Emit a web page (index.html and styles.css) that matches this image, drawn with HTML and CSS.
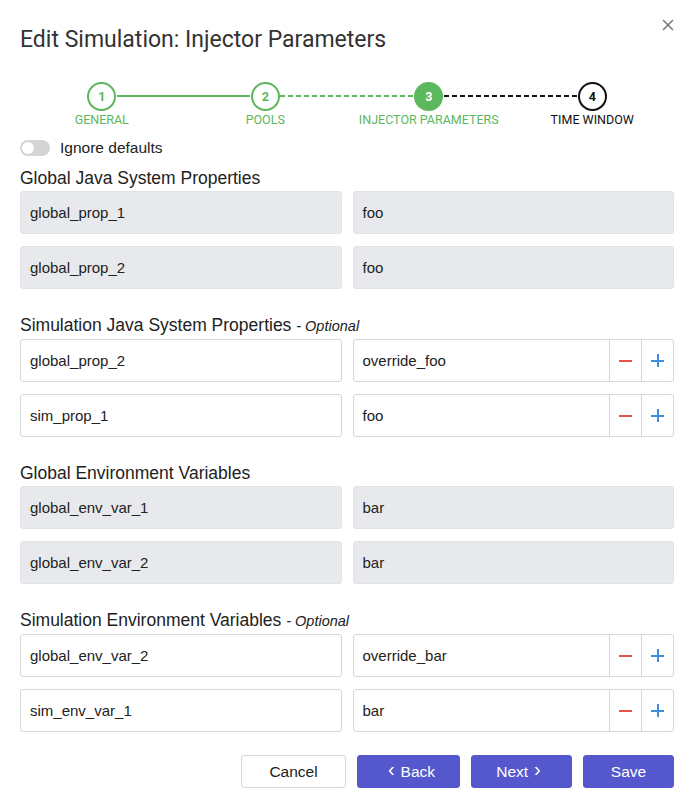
FILE: index.html
```html
<!DOCTYPE html>
<html>
<head>
<meta charset="utf-8">
<link rel="stylesheet" href="styles.css">
</head>
<body>
<div class="modal">
  <button class="close" aria-label="Close">
    <svg width="12" height="12" viewBox="0 0 12 12"><path d="M1 1L11 11M11 1L1 11" stroke="#7a7a7a" stroke-width="1.6" fill="none"/></svg>
  </button>
  <h1 class="title">Edit Simulation: Injector Parameters</h1>

  <div class="stepper">
    <div class="step done line-solid">
      <div class="circle">1</div>
      <div class="step-label">General</div>
    </div>
    <div class="step done line-dash-green">
      <div class="circle">2</div>
      <div class="step-label">Pools</div>
    </div>
    <div class="step active line-dash-black">
      <div class="circle">3</div>
      <div class="step-label">Injector Parameters</div>
    </div>
    <div class="step todo">
      <div class="circle">4</div>
      <div class="step-label">Time Window</div>
    </div>
  </div>

  <label class="toggle-row">
    <span class="toggle"><span class="knob"></span></span>
    <span class="toggle-text">Ignore defaults</span>
  </label>

  <section class="section">
    <h2 class="heading">Global Java System Properties</h2>
    <div class="row">
      <div class="field readonly">global_prop_1</div>
      <div class="field readonly">foo</div>
    </div>
    <div class="row">
      <div class="field readonly">global_prop_2</div>
      <div class="field readonly">foo</div>
    </div>
  </section>

  <section class="section">
    <h2 class="heading">Simulation Java System Properties <span class="opt">- Optional</span></h2>
    <div class="row">
      <div class="field">global_prop_2</div>
      <div class="field group"><span class="val">override_foo</span><span class="btn-cell minus"></span><span class="btn-cell plus"></span></div>
    </div>
    <div class="row">
      <div class="field">sim_prop_1</div>
      <div class="field group"><span class="val">foo</span><span class="btn-cell minus"></span><span class="btn-cell plus"></span></div>
    </div>
  </section>

  <section class="section">
    <h2 class="heading">Global Environment Variables</h2>
    <div class="row">
      <div class="field readonly">global_env_var_1</div>
      <div class="field readonly">bar</div>
    </div>
    <div class="row">
      <div class="field readonly">global_env_var_2</div>
      <div class="field readonly">bar</div>
    </div>
  </section>

  <section class="section">
    <h2 class="heading">Simulation Environment Variables <span class="opt">- Optional</span></h2>
    <div class="row">
      <div class="field">global_env_var_2</div>
      <div class="field group"><span class="val">override_bar</span><span class="btn-cell minus"></span><span class="btn-cell plus"></span></div>
    </div>
    <div class="row">
      <div class="field">sim_env_var_1</div>
      <div class="field group"><span class="val">bar</span><span class="btn-cell minus"></span><span class="btn-cell plus"></span></div>
    </div>
  </section>

  <div class="footer">
    <button class="btn btn-cancel">Cancel</button>
    <button class="btn btn-primary btn-back"><span class="chev">&#8249;</span>Back</button>
    <button class="btn btn-primary btn-next">Next<span class="chev">&#8250;</span></button>
    <button class="btn btn-primary btn-save">Save</button>
  </div>
</div>
</body>
</html>
```

FILE: styles.css
```css
* { box-sizing: border-box; }
html, body { margin: 0; padding: 0; background: #fff; }
body {
  font-family: "Liberation Sans", Arial, sans-serif;
  color: #222;
  width: 694px;
  height: 807px;
  overflow: hidden;
}
.modal {
  position: relative;
  padding: 26px 20px 0 20px;
}
.close {
  position: absolute;
  top: 19px;
  right: 20px;
  width: 12px;
  height: 12px;
  padding: 0;
  border: 0;
  background: none;
  display: block;
}
.close svg { display: block; }
.title {
  margin: 0;
  font-family: Roboto, "Liberation Sans", sans-serif;
  font-weight: 400;
  font-size: 23px;
  line-height: 28px;
  color: #333;
}
.stepper {
  display: grid;
  grid-template-columns: repeat(4, 1fr);
  margin-top: 28px;
}
.step {
  position: relative;
  display: flex;
  flex-direction: column;
  align-items: center;
}
.step::after {
  content: "";
  position: absolute;
  top: 13px;
  left: calc(50% + 15px);
  width: calc(100% - 30px);
  height: 2px;
}
.step.todo::after { display: none; }
.line-solid::after { background: #5cb85c; }
.line-dash-green::after {
  background: repeating-linear-gradient(to right, #5cb85c 0 5px, transparent 5px 8px);
}
.line-dash-black::after {
  background: repeating-linear-gradient(to right, #111 0 5px, transparent 5px 8px);
}
.circle {
  width: 29px;
  height: 29px;
  border-radius: 50%;
  border: 2px solid #5cb85c;
  color: #5cb85c;
  background: #fff;
  display: flex;
  align-items: center;
  justify-content: center;
  font-family: Roboto, "Liberation Sans", sans-serif;
  font-weight: 700;
  font-size: 12.5px;
}
.step.active .circle { background: #5cb85c; color: #fff; }
.step.todo .circle { border-color: #111; color: #111; }
.step-label {
  margin-top: 2px;
  font-family: Roboto, "Liberation Sans", sans-serif;
  font-size: 12.5px;
  line-height: 14px;
  text-transform: uppercase;
  color: #5cb85c;
}
.step.todo .step-label { color: #111; }

.toggle-row {
  display: flex;
  align-items: center;
  margin-top: 13px;
  height: 16px;
}
.toggle {
  width: 30px;
  height: 16px;
  border-radius: 8px;
  background: #d5d5d8;
  position: relative;
  display: block;
}
.knob {
  position: absolute;
  top: 2px;
  left: 2px;
  width: 12px;
  height: 12px;
  border-radius: 50%;
  background: #fff;
}
.toggle-text {
  margin-left: 10px;
  font-size: 15.5px;
  color: #222;
}

.section { margin-top: 11px; }
.section + .section { margin-top: 25px; }
.heading {
  margin: 0 0 2px 0;
  font-weight: 400;
  font-size: 17.5px;
  line-height: 22px;
  color: #222;
}
.opt {
  font-style: italic;
  font-size: 14.5px;
}
.row {
  display: grid;
  grid-template-columns: 1fr 1fr;
  column-gap: 11px;
}
.row + .row { margin-top: 12px; }
.field {
  height: 43px;
  border: 1px solid #d6d6d6;
  border-radius: 3px;
  display: flex;
  align-items: center;
  padding-left: 9px;
  font-size: 15px;
  color: #222;
}
.field.readonly {
  background: #e8e9ec;
  border-color: #e2e3e6;
}
.field.group { padding-left: 0; }
.val { flex: 1; padding-left: 9px; }
.btn-cell {
  width: 32px;
  height: 100%;
  border-left: 1px solid #d6d6d6;
  position: relative;
  display: block;
}
.btn-cell::before, .btn-cell::after {
  content: "";
  position: absolute;
  left: 50%;
  top: 50%;
}
.minus::before {
  width: 13px;
  height: 2px;
  margin-left: -7px;
  margin-top: -1px;
  background: #e8524a;
}
.minus::after { display: none; }
.plus::before {
  width: 13px;
  height: 2px;
  margin-left: -7px;
  margin-top: -1px;
  background: #3c8fe0;
}
.plus::after {
  width: 2px;
  height: 13px;
  margin-left: -1px;
  margin-top: -7px;
  background: #3c8fe0;
}

.footer {
  display: flex;
  justify-content: flex-end;
  gap: 11px;
  margin-top: 23px;
}
.btn {
  height: 33px;
  border-radius: 3px;
  font-family: "Liberation Sans", Arial, sans-serif;
  font-size: 15.5px;
  display: flex;
  align-items: center;
  justify-content: center;
  padding: 0;
}
.btn-cancel {
  width: 105px;
  background: #fff;
  border: 1px solid #d6d6d6;
  color: #222;
}
.btn-primary {
  background: #5558cd;
  border: 1px solid #5558cd;
  color: #fff;
}
.btn-back { width: 103px; }
.btn-next { width: 101px; }
.btn-save { width: 91px; }
.chev { font-size: 20px; margin: 0 6px; position: relative; top: -2px; }
```
